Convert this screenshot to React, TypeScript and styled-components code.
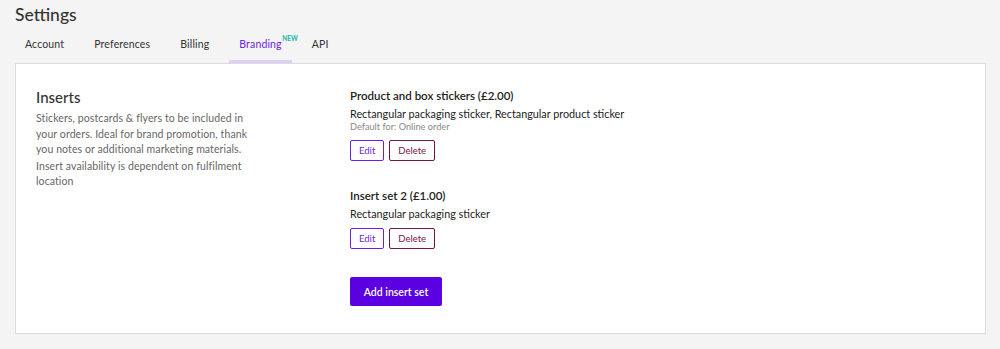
import React from 'react';
import styled, { createGlobalStyle } from 'styled-components';

const GlobalStyle = createGlobalStyle`
  html, body {
    margin: 0;
    padding: 0;
    background: #f4f4f4;
    font-family: Lato, "Open Sans", sans-serif;
    color: #2b2b2b;
  }
`;

const Page = styled.div`
  padding: 5px 14px 16px 15px;
`;

const Title = styled.h1`
  margin: 0;
  font-size: 17.5px;
  font-weight: 500;
  color: #333;
  line-height: 20px;
`;

const Tabs = styled.nav`
  display: flex;
  margin-top: 13px;
`;

const Tab = styled.div<{ $active?: boolean }>`
  position: relative;
  font-size: 10.5px;
  letter-spacing: 0.15px;
  padding: 0 10px 9px;
  margin-right: 10px;
  color: ${p => (p.$active ? '#6d22e8' : '#333')};
  border-bottom: 3px solid ${p => (p.$active ? '#ddd0f7' : 'transparent')};
  line-height: 13px;
`;

// sits over the tab edge, doesn't widen the tab
const NewBadge = styled.span`
  position: absolute;
  top: -3px;
  right: -6px;
  font-size: 6.5px;
  line-height: 8px;
  letter-spacing: 0;
  color: #1cb5a6;
  font-weight: 700;
`;

const Card = styled.section`
  background: #fff;
  border: 1px solid #dcdcdc;
  display: flex;
  padding: 24px 20px 27px 20px;
`;

const Intro = styled.div`
  width: 314px;
  flex-shrink: 0;
`;

const IntroTitle = styled.h2`
  margin: 0 0 5px;
  font-size: 15px;
  font-weight: 500;
  color: #333;
  line-height: 18px;
`;

const IntroText = styled.p`
  margin: 0 0 1px;
  font-size: 10.5px;
  line-height: 15.5px;
  letter-spacing: 0.1px;
  color: #666;
  width: 222px;
`;

const List = styled.div`
  display: flex;
  flex-direction: column;
  padding-top: 1px;
`;

const InsertSet = styled.div`
  margin-bottom: 28px;
`;

const SetTitle = styled.h3`
  margin: 0 0 4px;
  font-size: 11.5px;
  font-weight: 600;
  color: #222;
  line-height: 14px;
`;

const SetItems = styled.div`
  font-size: 10.8px;
  color: #222;
  line-height: 14px;
`;

const SetDefault = styled.div`
  font-size: 9.2px;
  color: #888;
  line-height: 12px;
`;

const Actions = styled.div`
  display: flex;
  gap: 5px;
  margin-top: 7px;
`;

const OutlineButton = styled.button<{ $tone: 'edit' | 'delete' }>`
  font-family: inherit;
  font-size: 9.5px;
  height: 21px;
  padding: 0 8px;
  background: #fff;
  border-radius: 2px;
  cursor: pointer;
  color: ${p => (p.$tone === 'edit' ? '#6a1ee6' : '#7a1446')};
  border: 1px solid ${p => (p.$tone === 'edit' ? '#6a1ee6' : '#7a1446')};
`;

const PrimaryButton = styled.button`
  font-family: inherit;
  font-size: 10.5px;
  font-weight: 600;
  align-self: flex-start;
  height: 29px;
  width: 92px;
  background: #5b00e0;
  color: #fff;
  border: none;
  border-radius: 2px;
  cursor: pointer;
`;

const sets = [
  {
    name: 'Product and box stickers (£2.00)',
    items: 'Rectangular packaging sticker, Rectangular product sticker',
    defaultFor: 'Online order',
  },
  {
    name: 'Insert set 2 (£1.00)',
    items: 'Rectangular packaging sticker',
  },
];

const App: React.FC = () => (
  <>
    <GlobalStyle />
    <Page>
      <Title>Settings</Title>
      <Tabs>
        <Tab>Account</Tab>
        <Tab>Preferences</Tab>
        <Tab>Billing</Tab>
        <Tab $active>
          Branding<NewBadge>NEW</NewBadge>
        </Tab>
        <Tab>API</Tab>
      </Tabs>
      <Card>
        <Intro>
          <IntroTitle>Inserts</IntroTitle>
          <IntroText>
            Stickers, postcards &amp; flyers to be included in your orders. Ideal for brand
            promotion, thank you notes or additional marketing materials.
          </IntroText>
          <IntroText>Insert availability is dependent on fulfilment location</IntroText>
        </Intro>
        <List>
          {sets.map(s => (
            <InsertSet key={s.name}>
              <SetTitle>{s.name}</SetTitle>
              <SetItems>{s.items}</SetItems>
              {s.defaultFor && <SetDefault>Default for: {s.defaultFor}</SetDefault>}
              <Actions>
                <OutlineButton $tone="edit">Edit</OutlineButton>
                <OutlineButton $tone="delete">Delete</OutlineButton>
              </Actions>
            </InsertSet>
          ))}
          <PrimaryButton>Add insert set</PrimaryButton>
        </List>
      </Card>
    </Page>
  </>
);

export default App;
